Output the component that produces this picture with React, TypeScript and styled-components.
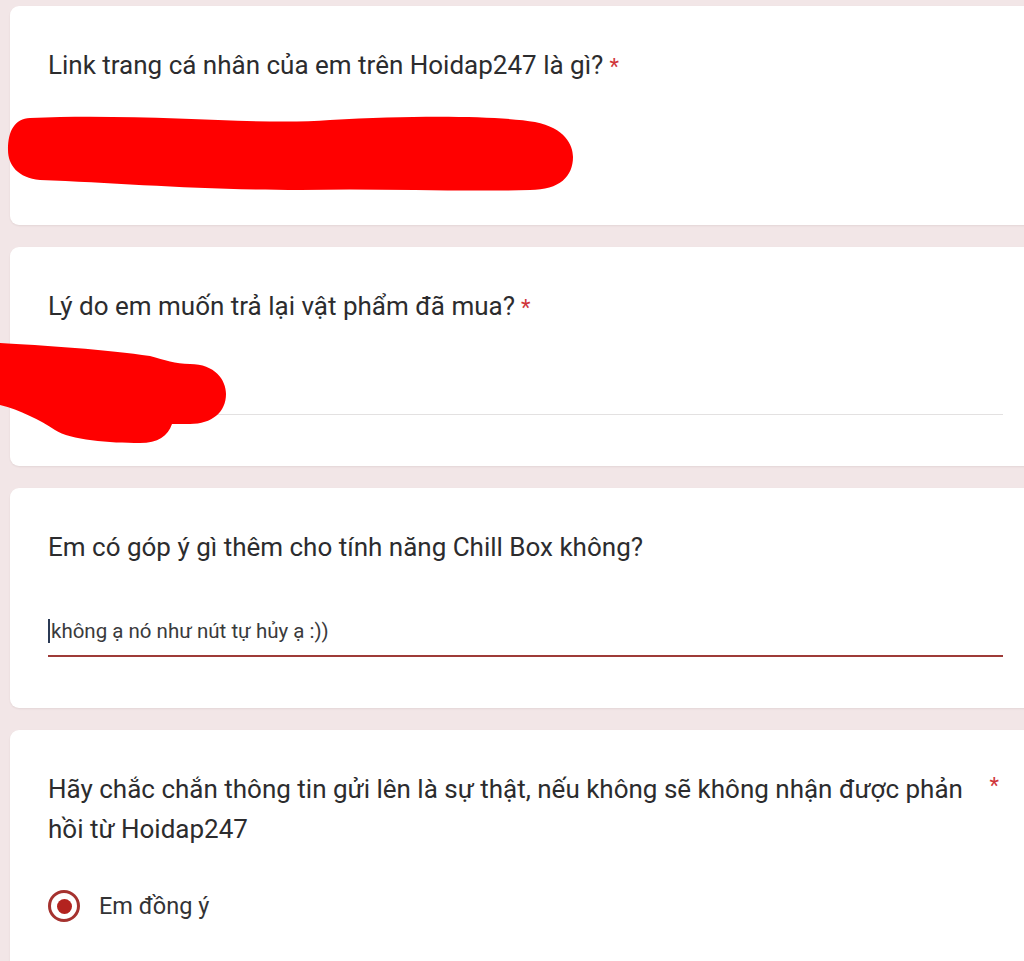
import React from "react";
import styled, { createGlobalStyle } from "styled-components";

const GlobalStyle = createGlobalStyle`
	html, body {
		margin: 0;
		padding: 0;
		overflow: hidden;
		background: #f2e6e7;
	}
	body {
		font-family: Roboto, "Noto Sans", "Liberation Sans", sans-serif;
	}
`;

const Page = styled.div`
	position: relative;
	display: flex;
	flex-direction: column;
	gap: 22px;
	padding: 6px 0 0 10px;
	min-height: 961px;
	box-sizing: border-box;
`;

const Card = styled.div`
	background: #ffffff;
	border-radius: 9px;
	margin-right: -20px;
	padding: 39px 41px 51px 38px;
	box-shadow: 0 1px 2px rgba(60, 20, 20, 0.08);
`;

const TitleRow = styled.div`
	display: flex;
	align-items: flex-start;
	gap: 20px;
`;

const Title = styled.div`
	flex: 1;
	font-size: 26px;
	line-height: 40px;
	color: #2c2c2e;
`;

const Star = styled.span`
	color: #d0353a;
	font-size: 22px;
	line-height: 1;
	margin-left: 6px;
`;

const SideStar = styled(Star)`
	margin: 6px 4px 0 0;
`;

const AnswerField = styled.div<{ $line: "none" | "idle" | "focus" }>`
	margin-top: 46px;
	height: 42px;
	box-sizing: content-box;
	display: flex;
	align-items: flex-end;
	border-bottom: ${(p) =>
		p.$line === "focus"
			? "2px solid #9e3b38"
			: p.$line === "idle"
			? "1px solid #e3e1e1"
			: "1px solid transparent"};
`;

const AnswerText = styled.div`
	font-size: 20.5px;
	line-height: 26px;
	color: #3a3a3c;
	padding-bottom: 11px;
	display: flex;
	align-items: center;
`;

const Caret = styled.span`
	display: inline-block;
	width: 2px;
	height: 24px;
	background: #2b3a55;
	margin-right: 1px;
`;

const RadioRow = styled.label`
	display: flex;
	align-items: center;
	gap: 19px;
	height: 40px;
	margin-top: 37px;
`;

const RadioOuter = styled.span`
	width: 26px;
	height: 26px;
	border: 3px solid #a5322f;
	border-radius: 50%;
	display: flex;
	align-items: center;
	justify-content: center;
`;

const RadioDot = styled.span`
	width: 15px;
	height: 15px;
	border-radius: 50%;
	background: #b3231f;
`;

const RadioLabel = styled.span`
	font-size: 23.5px;
	color: #333335;
`;

const Scribbles = styled.svg`
	position: absolute;
	left: 0;
	top: 0;
	pointer-events: none;
`;

function App() {
	return (
		<>
			<GlobalStyle />
			<Page>
				<Card>
					<Title>
						Link trang cá nhân của em trên Hoidap247 là gì?
						<Star>*</Star>
					</Title>
					<AnswerField $line="none" />
				</Card>

				<Card>
					<Title>
						Lý do em muốn trả lại vật phẩm đã mua?
						<Star>*</Star>
					</Title>
					<AnswerField $line="idle" />
				</Card>

				<Card>
					<Title>Em có góp ý gì thêm cho tính năng Chill Box không?</Title>
					<AnswerField $line="focus">
						<AnswerText>
							<Caret />
							không ạ nó như nút tự hủy ạ :))
						</AnswerText>
					</AnswerField>
				</Card>

				<Card>
					<TitleRow>
						<Title>
							Hãy chắc chắn thông tin gửi lên là sự thật, nếu không sẽ không nhận được phản
							hồi từ Hoidap247
						</Title>
						<SideStar>*</SideStar>
					</TitleRow>
					<RadioRow>
						<RadioOuter>
							<RadioDot />
						</RadioOuter>
						<RadioLabel>Em đồng ý</RadioLabel>
					</RadioRow>
				</Card>

				{/* red marker strokes hiding the answers */}
				<Scribbles width="1024" height="961" viewBox="0 0 1024 961">
					<path
						fill="#ff0000"
						d="M30,118 C150,113 260,126 330,120 C420,115 500,116 535,122 C565,128 573,145 573,157 C573,176 560,190 530,190 C450,192 380,188 300,190 C200,190 120,183 40,180 C18,178 8,165 8,150 C8,130 15,119 30,118 Z"
					/>
					<path
						fill="#ff0000"
						d="M0,343 C40,345 110,350 150,356 C165,360 175,364 190,364 C215,364 226,380 226,394 C226,412 212,424 190,424 L172,424 C168,436 158,443 140,443 C110,443 70,440 55,430 C40,420 20,410 0,405 Z"
					/>
				</Scribbles>
			</Page>
		</>
	);
}

export default App;
